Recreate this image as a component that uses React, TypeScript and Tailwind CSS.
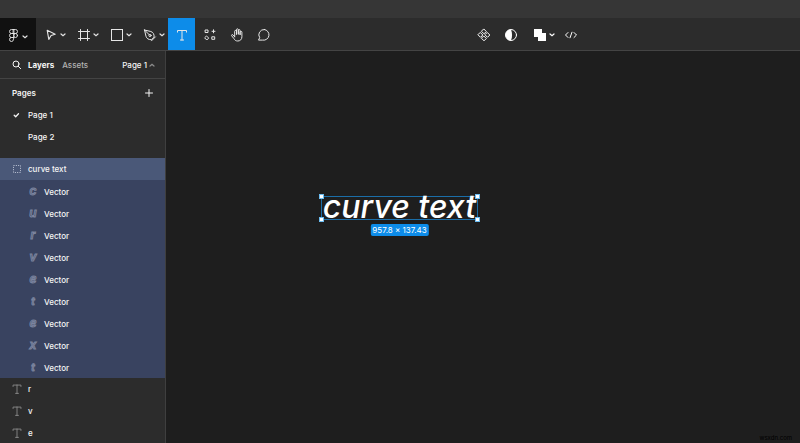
import { useState } from 'react';
import type { ReactNode } from 'react';

const Icon = ({ className = 'size-4', children }: { className?: string; children: ReactNode }) => (
  <svg
    viewBox="0 0 16 16"
    className={`${className} shrink-0`}
    fill="none"
    stroke="currentColor"
    strokeWidth="1"
    strokeLinecap="round"
    strokeLinejoin="round"
    aria-hidden="true"
  >
    {children}
  </svg>
);

const Chevron = () => (
  <svg viewBox="0 0 6 6" className="size-1.5 shrink-0" fill="none" stroke="currentColor" strokeWidth="1.2" strokeLinecap="round" aria-hidden="true">
    <path d="M1 2l2 1.800L5 2" />
  </svg>
);

const FigmaIcon = () => (
  <Icon>
    <path d="M8.500 2.500h-2a2 2 0 000 4h2zM8.500 2.500h2a2 2 0 010 4h-2zM8.500 6.500h-2a2 2 0 000 4h2zM8.500 10.500h-2a2 2 0 102 2z" strokeWidth=".9" />
    <circle cx="10.500" cy="8.500" r="2" strokeWidth=".9" />
  </Icon>
);

const MoveIcon = () => (
  <Icon>
    <path d="M4.200 3.300l8 4-4.100 1.200-2.300 3.900z" strokeWidth="1.1" />
  </Icon>
);

const FrameIcon = () => (
  <Icon>
    <path d="M4.500 2.500v11M11.500 2.500v11M2.500 4.500h11M2.500 11.500h11" />
  </Icon>
);

const RectangleIcon = () => (
  <Icon>
    <rect x="2.500" y="2.500" width="11" height="11" strokeLinejoin="miter" />
  </Icon>
);

const PenIcon = () => (
  <Icon>
    <path d="M2.500 3l6.300 1.500c2.300.6 3.500 2.800 3.300 5.600l-2.600 2.600c-3 .1-4.900-1.200-5.500-3.400L2.500 3zM2.700 3.200l4.600 4.600M13.400 9.900l-3.900 3.900" />
    <circle cx="8" cy="8.500" r="1.1" />
  </Icon>
);

const TextIcon = ({ className }: { className?: string }) => (
  <Icon className={className}>
    <path d="M3.500 5V3.500h9V5M8 3.500v9.500M6.500 13h3" strokeLinecap="square" strokeLinejoin="miter" />
  </Icon>
);

const ResourcesIcon = () => (
  <Icon>
    <rect x="3.500" y="3" width="2.500" height="2.500" />
    <path d="M11.500 2.800v3M10 4.300h3M4.800 9.200l1.900 1.900-1.900 1.900-1.900-1.900z" />
    <rect x="10.200" y="9.800" width="2.500" height="2.500" />
  </Icon>
);

const HandIcon = () => (
  <Icon>
    <path d="M5.700 9.800V4.300a.9.9 0 011.800 0V7.300M7.500 7V2.700a.9.9 0 011.800 0V7M9.300 7V3.500a.9.9 0 011.800 0v4M11.100 7.500V5.200a.9.9 0 011.800 0v4.600c0 2.500-1.700 4.200-4.100 4.200-2 0-3-.8-3.900-2.400L2.600 8.700c-.4-1 .7-1.500 1.400-.8l1.700 1.900" />
  </Icon>
);

const CommentIcon = () => (
  <Icon>
    <path d="M8.500 2.500a5.300 5.300 0 11-1.800 10.600H2.500l1.200-2.400A5.300 5.300 0 018.500 2.500z" />
  </Icon>
);

const ComponentIcon = () => (
  <Icon>
    <path d="M8 2.200l2.300 2.300L8 6.800 5.700 4.500zM8 9.200l2.300 2.300L8 13.800l-2.300-2.300zM4.500 5.700L6.800 8l-2.300 2.300L2.200 8zM11.500 5.700L13.800 8l-2.300 2.300L9.200 8z" />
  </Icon>
);

const MaskIcon = () => (
  <Icon>
    <circle cx="8" cy="8" r="5.500" />
    <path d="M8 2.500a5.500 5.500 0 000 11c1.400-3.500 1.400-7.500 0-11z" fill="currentColor" stroke="none" />
  </Icon>
);

const UnionIcon = () => (
  <Icon>
    <path d="M2 2h8v4h4v8H6v-4H2z" fill="currentColor" stroke="none" />
  </Icon>
);

const CodeIcon = () => (
  <Icon>
    <path d="M5 5.500L2.500 8 5 10.500M11 5.500L13.500 8 11 10.500M9 5.200l-2 5.600" />
  </Icon>
);

const menuTools = [
  { name: 'Move', icon: <MoveIcon /> },
  { name: 'Frame', icon: <FrameIcon /> },
  { name: 'Rectangle', icon: <RectangleIcon /> },
  { name: 'Pen', icon: <PenIcon /> },
];

const plainTools = [
  { name: 'Resources', icon: <ResourcesIcon /> },
  { name: 'Hand', icon: <HandIcon /> },
  { name: 'Comment', icon: <CommentIcon /> },
];

const vectors = ['c', 'u', 'r', 'v', 'e', 't', 'e', 'x', 't'];
const textLayers = ['r', 'v', 'e'];
const pages = ['Page 1', 'Page 2'];

const ToolButton = ({ name, children }: { name: string; children: ReactNode }) => (
  <button aria-label={name} className="flex w-[27px] items-center justify-center pt-0.5 hover:bg-black/40">
    {children}
  </button>
);

const MenuButton = ({ name, children }: { name: string; children: ReactNode }) => (
  <button aria-label={name} className="flex w-[33px] items-center justify-end gap-px pt-0.5 pr-[3px] hover:bg-black/40">
    {children}
    <Chevron />
  </button>
);

const Toolbar = () => (
  <header className="flex h-[33px] shrink-0 border-b border-[#444444] bg-[#2c2c2c] text-[#e6e6e6]">
    <button aria-label="Main menu" className="flex w-9 items-center justify-center gap-px bg-[#111111] pt-0.5 pr-1">
      <FigmaIcon />
      <span className="pt-1"><Chevron /></span>
    </button>
    {menuTools.map(tool => (
      <MenuButton key={tool.name} name={tool.name}>{tool.icon}</MenuButton>
    ))}
    <button aria-label="Text" className="mr-px flex w-[27px] items-center justify-center bg-[#0d8ce9] pt-0.5">
      <TextIcon />
    </button>
    {plainTools.map(tool => (
      <ToolButton key={tool.name} name={tool.name}>{tool.icon}</ToolButton>
    ))}
    <div className="flex flex-1 justify-center pr-[22px] text-white">
      <ToolButton name="Create component"><ComponentIcon /></ToolButton>
      <ToolButton name="Use as mask"><MaskIcon /></ToolButton>
      <MenuButton name="Union selection"><UnionIcon /></MenuButton>
      <ToolButton name="Dev mode"><CodeIcon /></ToolButton>
    </div>
  </header>
);

const Sidebar = () => {
  const [currentPage, setCurrentPage] = useState('Page 1');

  return (
    <aside className="w-[166px] shrink-0 overflow-hidden border-r border-[#3f3f3f] bg-[#2c2c2c] font-medium text-[#f5f5f5]">
      <div className="flex h-7 items-center border-b border-[#444444] pr-2.5 pl-2">
        <button aria-label="Search" className="mr-1">
          <Icon>
            <circle cx="8" cy="7" r="3" />
            <path d="M10.200 9.200l2.500 2.500" />
          </Icon>
        </button>
        <button className="font-bold">Layers</button>
        <button className="ml-2 text-[#b3b3b3]">Assets</button>
        <button className="ml-auto flex items-center gap-0.5">
          {currentPage}
          <span className="rotate-180 text-[#8c8c8c]"><Chevron /></span>
        </button>
      </div>

      <div className="flex h-[25px] items-center justify-between pt-0.5 pr-2 pl-3">
        <h2 className="font-semibold">Pages</h2>
        <button aria-label="Add page">
          <Icon>
            <path d="M8 4.500v7M4.500 8h7" />
          </Icon>
        </button>
      </div>
      <ul className="mb-2.5">
        {pages.map(page => (
          <li key={page}>
            <button onClick={() => setCurrentPage(page)} className="flex h-[22px] w-full items-center gap-1 pl-2">
              <Icon>{page === currentPage && <path d="M6.200 8.200l1.500 1.500 2.800-3" strokeWidth="1.300" />}</Icon>
              {page}
            </button>
          </li>
        ))}
      </ul>

      <ul>
        <li>
          <button className="flex h-[22px] w-full items-center gap-1 bg-[#4a5878] pl-2">
            <Icon className="size-4 text-[#c3cada]">
              <rect x="5.500" y="4.500" width="7" height="7" strokeDasharray="1 1.330" strokeLinecap="butt" />
            </Icon>
            curve text
          </button>
          <ul className="bg-[#394360]">
            {vectors.map((letter, i) => (
              <li key={i}>
                <button className="flex h-[22px] w-full items-center gap-1 pt-px pl-6">
                  <span
                    aria-hidden="true"
                    className={`w-4 pb-0.5 pl-0.5 text-center font-semibold text-[#394360] italic [-webkit-text-stroke:1px_#7c859f] ${letter === 't' ? 'text-[10px]' : 'text-[12px]'}`}
                  >
                    {letter}
                  </span>
                  Vector
                </button>
              </li>
            ))}
          </ul>
        </li>
        {textLayers.map(layer => (
          <li key={layer}>
            <button className="flex h-[22px] w-full items-center gap-1 pl-2">
              <span className="w-4 pl-0.5"><TextIcon className="size-3.5 text-[#8c8c8c]" /></span>
              {layer}
            </button>
          </li>
        ))}
      </ul>
    </aside>
  );
};

const handles = [
  '-top-[3px] -left-[3px]',
  '-top-[3px] -right-[3px]',
  '-bottom-[3px] -left-[3px]',
  '-bottom-[3px] -right-[3px]',
];

const Canvas = () => (
  <main className="relative flex-1 bg-[#1e1e1e]">
    <div className="absolute top-[145px] left-[155px] flex h-6 w-[157px] items-start justify-center border border-[#1b6ea8]">
      <span className="text-[32px] leading-5 font-medium whitespace-nowrap text-white italic">curve text</span>
      {handles.map(corner => (
        <span key={corner} className={`absolute size-[5px] border border-[#6cbcf0] bg-white ${corner}`} />
      ))}
      <span className="absolute top-[27px] left-1/2 h-3 -translate-x-1/2 rounded-xs bg-[#0d8ce9] px-0.5 leading-3 whitespace-nowrap text-white">
        957.8 × 137.43
      </span>
    </div>
    <span className="absolute right-2 bottom-0 text-[6px] leading-[10px] text-black">wsxdn.com</span>
  </main>
);

const App = () => (
  <div className="flex h-screen flex-col overflow-hidden bg-[#1e1e1e] font-['Inter','Liberation_Sans',sans-serif] text-[8px] leading-3">
    <div className="h-[18px] shrink-0 bg-[#363636]" />
    <Toolbar />
    <div className="flex min-h-0 flex-1">
      <Sidebar />
      <Canvas />
    </div>
  </div>
);

export default App;
